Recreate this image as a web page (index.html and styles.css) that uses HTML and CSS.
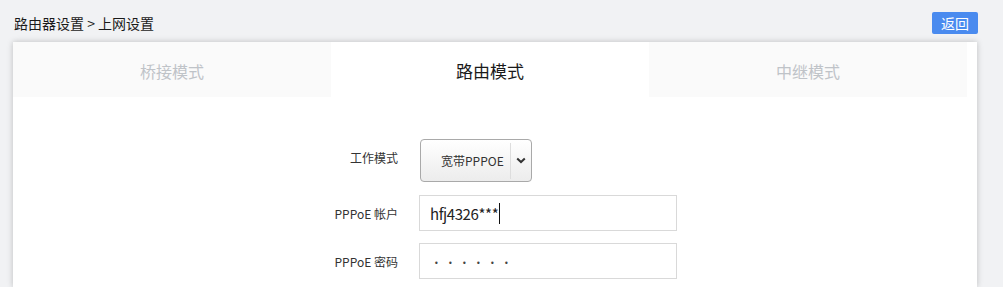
FILE: index.html
```html
<!DOCTYPE html>
<html lang="zh-CN">
<head>
    <meta charset="UTF-8">
    <title>上网设置</title>
    <link rel="stylesheet" href="styles.css">
</head>
<body>
    <div class="topbar">
        <div class="crumb">路由器设置 &gt; 上网设置</div>
        <button class="back">返回</button>
    </div>
    <div class="card">
        <div class="tabs">
            <div class="tab">桥接模式</div>
            <div class="tab active">路由模式</div>
            <div class="tab">中继模式</div>
        </div>
        <div class="form">
            <div class="row">
                <label class="row-label label-up">工作模式</label>
                <div class="select">
                    <span class="select-text">宽带PPPOE</span>
                    <span class="select-arrow">
                        <svg width="10" height="7" viewBox="0 0 10 7"><path d="M1.2 1.4 L5 5 L8.8 1.4" fill="none" stroke="#333" stroke-width="2"/></svg>
                    </span>
                </div>
            </div>
            <div class="row">
                <label class="row-label">PPPoE 帐户</label>
                <div class="field"><span class="value">hfj4326***</span><span class="caret"></span></div>
            </div>
            <div class="row">
                <label class="row-label">PPPoE 密码</label>
                <div class="field"><span class="dots">••••••</span></div>
            </div>
        </div>
    </div>
</body>
</html>
```

FILE: styles.css
```css
body {
    margin: 0;
    background-color: #f1f2f4;
    font-family: "Noto Sans CJK SC", "Noto Sans", sans-serif;
    color: #222;
}
.topbar {
    display: flex;
    justify-content: space-between;
    align-items: center;
    height: 22px;
    padding: 12px 25px 0 14px;
}
.crumb {
    font-size: 14px;
    line-height: 22px;
    color: #1a1a1a;
}
.back {
    width: 46px;
    height: 22px;
    padding: 0;
    border: none;
    border-radius: 2px;
    background-color: #4a8bef;
    color: #fff;
    font-family: inherit;
    font-size: 14px;
    line-height: 22px;
}
.card {
    margin: 8px 26px 0 13px;
    height: 245px;
    background-color: #fff;
    box-shadow: 0 0 6px rgba(0, 0, 0, 0.22);
}
.tabs {
    display: flex;
    margin-right: 10px;
    height: 55px;
}
.tab {
    flex: 1;
    text-align: center;
    line-height: 58px;
    font-size: 16px;
    color: #bfc3c8;
    background-color: #fafafa;
}
.tab.active {
    background-color: #fff;
    color: #1a1a1a;
    font-size: 17px;
}
.form {
    padding-top: 42px;
}
.row {
    display: flex;
    align-items: center;
    gap: 21px;
    margin-bottom: 12px;
}
.row:first-child {
    margin-bottom: 13px;
}
.row-label {
    width: 385px;
    text-align: right;
    font-size: 12px;
    color: #333;
}
.label-up {
    position: relative;
    top: -3px;
}
.select {
    display: flex;
    align-items: center;
    box-sizing: border-box;
    width: 112px;
    height: 43px;
    margin-left: 1px;
    border: 1px solid #a9a9a9;
    border-radius: 4px;
    background: linear-gradient(#ffffff, #ececec);
}
.select-text {
    flex: 1;
    padding-left: 20px;
    font-size: 12px;
    color: #333;
}
.select-arrow {
    display: flex;
    align-items: center;
    justify-content: center;
    width: 20px;
    height: 36px;
    border-left: 1px solid #ddd;
}
.field {
    display: flex;
    align-items: center;
    box-sizing: border-box;
    width: 258px;
    height: 36px;
    padding-left: 10px;
    border: 1px solid #d9d9d9;
    background-color: #fff;
}
.value {
    font-size: 15px;
    letter-spacing: -0.4px;
    color: #222;
}
.caret {
    width: 1px;
    height: 21px;
    margin-left: 1px;
    background-color: #111;
}
.dots {
    font-family: "DejaVu Sans", sans-serif;
    font-size: 8px;
    letter-spacing: 9.3px;
    padding: 4px 0 0 4px;
    color: #444;
}
```
